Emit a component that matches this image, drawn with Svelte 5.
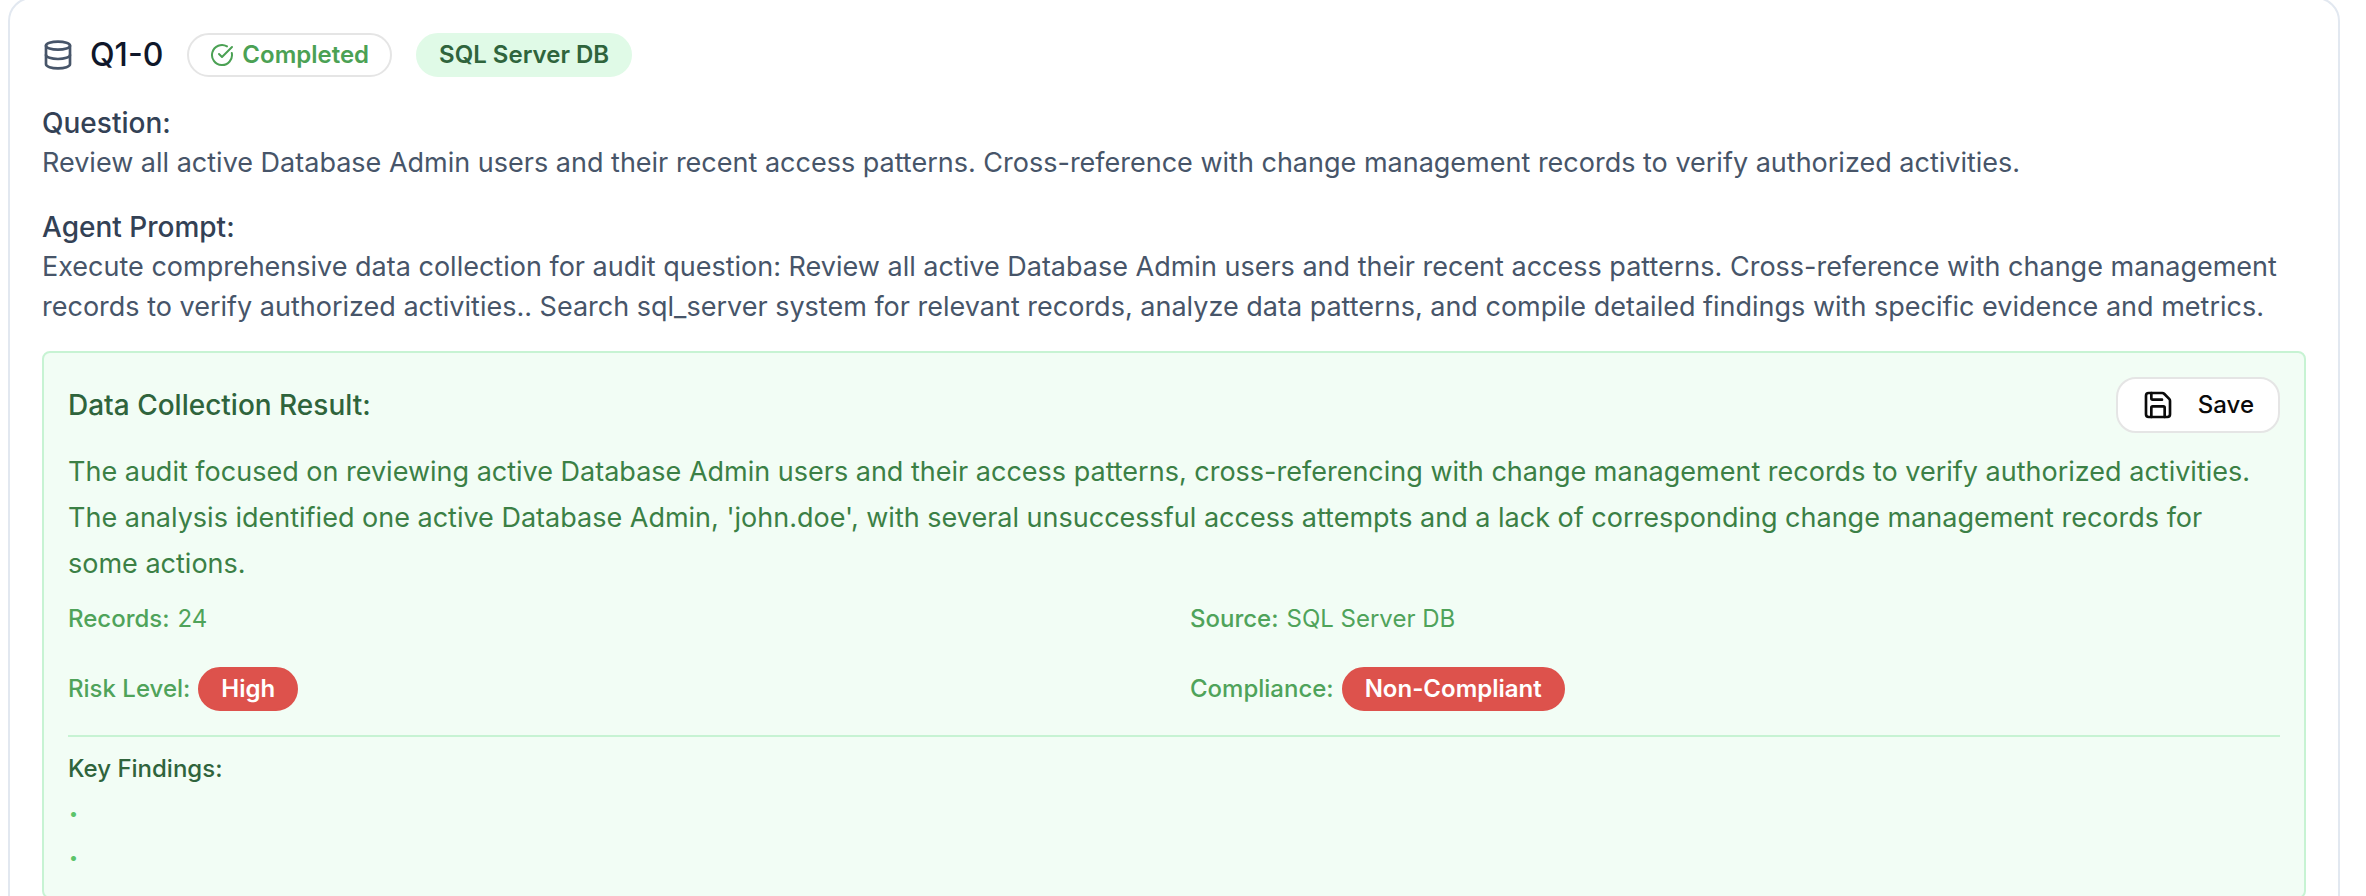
<script>
  const question =
    'Review all active Database Admin users and their recent access patterns. Cross-reference with change management records to verify authorized activities.';
  const prompt = `Execute comprehensive data collection for audit question: ${question}. Search sql_server system for relevant records, analyze data patterns, and compile detailed findings with specific evidence and metrics.`;
  const summary =
    "The audit focused on reviewing active Database Admin users and their access patterns, cross-referencing with change management records to verify authorized activities. The analysis identified one active Database Admin, 'john.doe', with several unsuccessful access attempts and a lack of corresponding change management records for some actions.";
  const findings = ['', ''];
</script>

<article class="card">
  <header class="head">
    <svg class="icon db" viewBox="0 0 24 24" aria-hidden="true">
      <ellipse cx="12" cy="5" rx="9" ry="3" />
      <path d="M3 5V19A9 3 0 0 0 21 19V5" />
      <path d="M3 12A9 3 0 0 0 21 12" />
    </svg>
    <h2>Q1-0</h2>
    <span class="badge outline">
      <svg class="icon small" viewBox="0 0 24 24" aria-hidden="true">
        <path d="M21.801 10A10 10 0 1 1 17 3.335" />
        <path d="m9 11 3 3L22 4" />
      </svg>
      Completed
    </span>
    <span class="badge soft">SQL Server DB</span>
  </header>

  <section class="block">
    <h3>Question:</h3>
    <p>{question}</p>
  </section>

  <section class="block">
    <h3>Agent Prompt:</h3>
    <p>{prompt}</p>
  </section>

  <section class="result">
    <div class="result-head">
      <h3>Data Collection Result:</h3>
      <button type="button">
        <svg class="icon" viewBox="0 0 24 24" aria-hidden="true">
          <path d="M15.2 3a2 2 0 0 1 1.4.6l3.8 3.8a2 2 0 0 1 .6 1.4V19a2 2 0 0 1-2 2H5a2 2 0 0 1-2-2V5a2 2 0 0 1 2-2z" />
          <path d="M17 21v-7a1 1 0 0 0-1-1H8a1 1 0 0 0-1 1v7" />
          <path d="M7 3v4a1 1 0 0 0 1 1h7" />
        </svg>
        Save
      </button>
    </div>
    <p class="summary">{summary}</p>
    <dl class="facts">
      <div><dt>Records:</dt><dd>24</dd></div>
      <div><dt>Source:</dt><dd>SQL Server DB</dd></div>
      <div><dt>Risk Level:</dt><dd class="badge danger">High</dd></div>
      <div><dt>Compliance:</dt><dd class="badge danger">Non-Compliant</dd></div>
    </dl>
    <div class="findings">
      <h4>Key Findings:</h4>
      <ul>
        {#each findings as finding}
          <li><span class="dot">•</span>{finding}</li>
        {/each}
      </ul>
    </div>
  </section>
</article>

<style>
  :global(body) {
    background: #fff;
    overflow: hidden;
  }
  .card {
    box-sizing: border-box;
    margin: -3px 26px 0 8px;
    padding: 32px;
    border: 2px solid #e2e8f0;
    border-radius: 24px;
    background: #fff;
    color: #475569;
    font: 400 27px/40px Inter, 'Liberation Sans', sans-serif;
  }
  h2, h3, h4, p, dl, dd, ul {
    margin: 0;
    padding: 0;
  }
  .icon {
    width: 32px;
    height: 32px;
    flex: none;
    fill: none;
    stroke: currentColor;
    stroke-width: 2;
    stroke-linecap: round;
    stroke-linejoin: round;
  }
  .small {
    width: 24px;
    height: 24px;
  }
  .head {
    display: flex;
    align-items: center;
    gap: 24px;
    height: 48px;
  }
  .head h2 {
    margin-left: -8px;
    font-size: 32px;
    line-height: 48px;
    font-weight: 500;
    color: #0f172a;
  }
  .badge {
    display: inline-flex;
    align-items: center;
    gap: 8px;
    padding: 4px 21px;
    border: 2px solid transparent;
    border-radius: 22px;
    font-size: 24px;
    line-height: 32px;
    font-weight: 600;
  }
  .outline {
    border-color: #e5e5e5;
    color: #4ba154;
  }
  .soft {
    background: #e0fae7;
    border-color: #e0fae7;
    color: #2f643c;
  }
  .block {
    margin-top: 24px;
  }
  h3 {
    font-size: 28px;
    line-height: 40px;
    font-weight: 500;
    color: #334155;
  }
  .result {
    margin-top: 24px;
    padding: 24px;
    border: 2px solid #c7f3d3;
    border-radius: 8px;
    background: #f2fdf5;
  }
  .result-head {
    display: flex;
    align-items: center;
    justify-content: space-between;
  }
  .result h3, h4 {
    color: #2f643c;
  }
  button {
    display: flex;
    align-items: center;
    gap: 24px;
    height: 56px;
    padding: 0 24px;
    border: 2px solid #e5e5e5;
    border-radius: 20px;
    background: #fff;
    color: #0a0a0a;
    font: 500 24px/32px Inter, 'Liberation Sans', sans-serif;
  }
  .summary {
    margin-top: 16px;
    padding-right: 16px;
    line-height: 46px;
    color: #3b8045;
  }
  .facts {
    display: grid;
    grid-template-columns: 1fr 1fr;
    gap: 32px;
    margin-top: 16px;
    font-size: 24px;
    line-height: 32px;
    color: #4fa35a;
  }
  .facts div {
    display: flex;
    align-items: center;
    gap: 8px;
  }
  .facts dt {
    font-weight: 500;
  }
  .danger {
    background: #dd524c;
    border-color: #dd524c;
    color: #fff;
  }
  .findings {
    margin-top: 24px;
    padding-top: 16px;
    border-top: 2px solid #c7f3d3;
  }
  h4 {
    font-size: 24px;
    line-height: 32px;
    font-weight: 500;
  }
  ul {
    display: grid;
    gap: 12px;
    margin-top: 12px;
    padding-left: 1px;
    list-style: none;
    font-size: 16px;
    line-height: 32px;
  }
  .dot {
    color: #5cc46a;
  }
</style>
